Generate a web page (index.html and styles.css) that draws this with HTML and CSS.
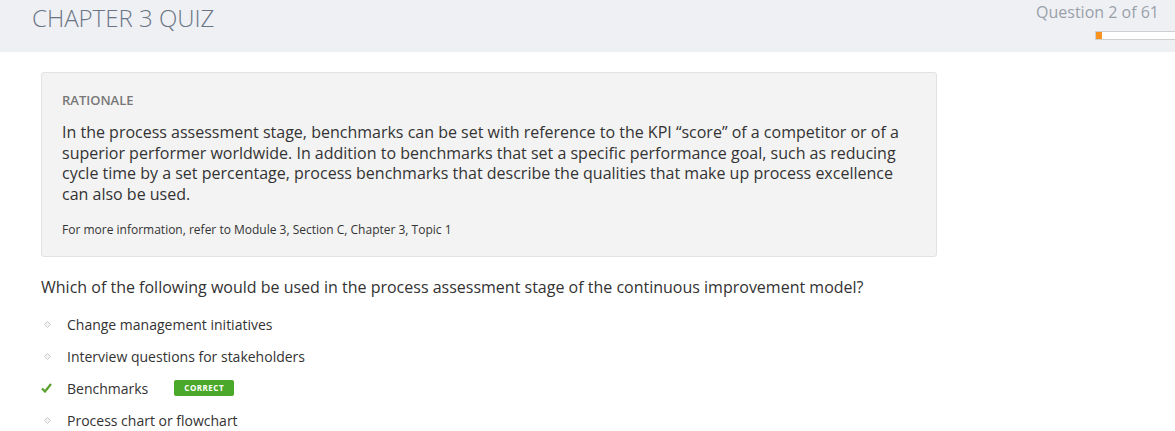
FILE: index.html
```html
<!DOCTYPE html>
<html>
<head>
<meta charset="utf-8">
<link rel="stylesheet" href="styles.css">
</head>
<body>
<header class="topbar">
  <h1 class="title">CHAPTER 3 QUIZ</h1>
  <div class="progress-area">
    <div class="counter">Question 2 of 61</div>
    <div class="progress"><div class="progress-fill" style="width:7%"></div></div>
  </div>
</header>
<main class="content">
  <section class="rationale">
    <div class="rationale-label">RATIONALE</div>
    <p class="rationale-text">In the process assessment stage, benchmarks can be set with reference to the KPI “score” of a competitor or of a superior performer worldwide. In addition to benchmarks that set a specific performance goal, such as reducing cycle time by a set percentage, process benchmarks that describe the qualities that make up process excellence can also be used.</p>
    <p class="rationale-ref">For more information, refer to Module 3, Section C, Chapter 3, Topic 1</p>
  </section>
  <p class="question">Which of the following would be used in the process assessment stage of the continuous improvement model?</p>
  <ul class="options">
    <li class="option"><span class="marker"><svg width="7" height="7" viewBox="0 0 7 7"><path d="M3.5 0.5 L6.5 3.5 L3.5 6.5 L0.5 3.5 Z" fill="#f4f4f4" stroke="#cacaca" stroke-width="1"/></svg></span><span class="opt-text">Change management initiatives</span></li>
    <li class="option"><span class="marker"><svg width="7" height="7" viewBox="0 0 7 7"><path d="M3.5 0.5 L6.5 3.5 L3.5 6.5 L0.5 3.5 Z" fill="#f4f4f4" stroke="#cacaca" stroke-width="1"/></svg></span><span class="opt-text">Interview questions for stakeholders</span></li>
    <li class="option"><span class="marker check"><svg width="11" height="10" viewBox="0 0 11 10"><path d="M1 5.5 L4 8.5 L10 1" fill="none" stroke="#5aa02c" stroke-width="2.2"/></svg></span><span class="opt-text">Benchmarks</span><span class="badge">CORRECT</span></li>
    <li class="option"><span class="marker"><svg width="7" height="7" viewBox="0 0 7 7"><path d="M3.5 0.5 L6.5 3.5 L3.5 6.5 L0.5 3.5 Z" fill="#f4f4f4" stroke="#cacaca" stroke-width="1"/></svg></span><span class="opt-text">Process chart or flowchart</span></li>
  </ul>
</main>
</body>
</html>
```
FILE: styles.css
```css
* { box-sizing: border-box; }
body {
  margin: 0;
  font-family: "Open Sans", "Liberation Sans", sans-serif;
  color: #333;
  background: #fff;
}
.topbar {
  height: 52px;
  background: #eff0f4;
  display: flex;
  justify-content: space-between;
  align-items: flex-start;
}
.title {
  margin: 0;
  padding: 2px 0 0 32px;
  font-size: 24px;
  font-weight: 300;
  line-height: 32px;
  color: #6a7585;
}
.progress-area {
  display: flex;
  flex-direction: column;
  align-items: flex-end;
}
.counter {
  padding: 1px 16px 0 0;
  font-size: 16px;
  line-height: 22px;
  color: #9aa0aa;
}
.progress {
  margin-top: 8px;
  width: 80px;
  height: 9px;
  background: #fff;
  border: 1px solid #cfcfcf;
  border-right: none;
}
.progress-fill {
  height: 100%;
  background: #f7931e;
}
.content {
  padding: 20px 0 0 41px;
}
.rationale {
  width: 896px;
  background: #f3f3f3;
  border: 1px solid #e2e2e2;
  border-radius: 3px;
  padding: 19px 20px 18px 20px;
}
.rationale-label {
  font-size: 13px;
  font-weight: 600;
  color: #777;
  line-height: 16px;
}
.rationale-text {
  margin: 14px 0 0;
  font-size: 16px;
  line-height: 20.5px;
  color: #333;
}
.rationale-ref {
  margin: 18px 0 0;
  font-size: 12px;
  line-height: 16px;
  color: #333;
}
.question {
  margin: 19px 0 0;
  font-size: 16px;
  line-height: 22px;
  color: #333;
}
.options {
  list-style: none;
  margin: 10px 0 0;
  padding: 0;
}
.option {
  display: flex;
  align-items: center;
  height: 32px;
  font-size: 14px;
  color: #333;
}
.marker {
  width: 26px;
  display: flex;
  padding-left: 3px;
}
.marker.check { padding-left: 0; }
.badge {
  margin-left: 26px;
  background: #4aa82b;
  color: #fff;
  font-size: 8px;
  font-weight: 700;
  letter-spacing: 0.5px;
  border-radius: 2px;
  padding: 2px 10px;
  line-height: 12px;
}
```
